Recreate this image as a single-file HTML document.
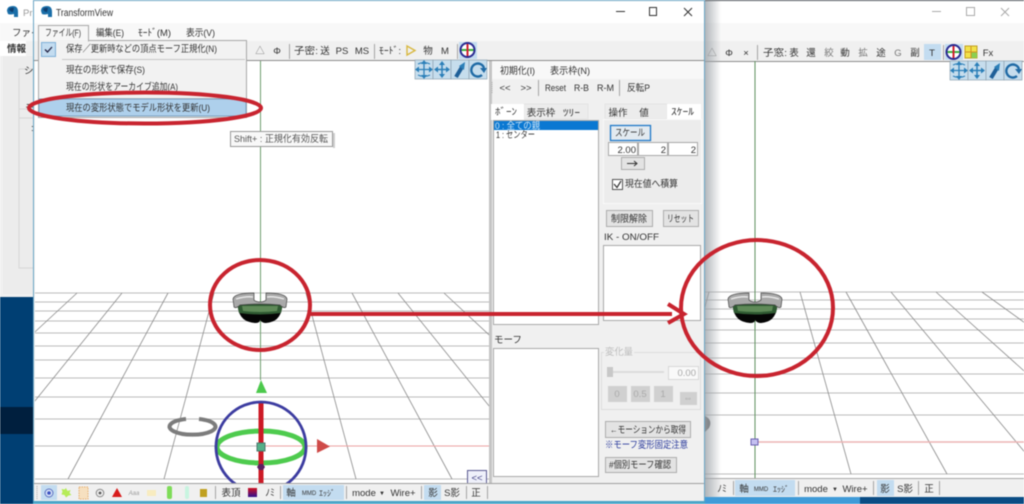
<!DOCTYPE html>
<html lang="ja"><head><meta charset="utf-8"><title>TransformView</title>
<style>
html,body{margin:0;padding:0;background:#fff;width:1024px;height:504px;overflow:hidden}
svg{display:block;filter:blur(.45px)}
text{font-family:"Liberation Sans","Noto Sans CJK JP",sans-serif;font-size:9.500px;fill:#333}
.m{text-anchor:middle}
.btn{fill:#e3e3e3;stroke:#adadad}
.box{fill:#fff;stroke:#a9a9a9}
.sel{fill:#c3dcf0}
.sep{stroke:#a5a5a5;stroke-width:1}
.gl{stroke:#bdbdbd;stroke-width:1}
.pl{stroke:#8a8a8a;stroke-width:.8}
.red{fill:none;stroke:#c8242f;stroke-width:4}
</style></head><body>
<svg width="1024" height="504" viewBox="0 0 1024 504" xmlns="http://www.w3.org/2000/svg">
<defs>
<linearGradient id="sh" x1="0" x2="1" y1="0" y2="0"><stop offset="0" stop-color="#9aa0a6" stop-opacity=".75"/><stop offset="1" stop-color="#9aa0a6" stop-opacity="0"/></linearGradient>
<linearGradient id="rp" x1="0" x2="0" y1="0" y2="1"><stop offset="0" stop-color="#d01020"/><stop offset="1" stop-color="#301090"/></linearGradient>
<g id="helm">
<path d="M-22,3Q-20,17-5,18Q0,18 0,15Q2,18 6,18Q20,17 22,3Z" fill="#050505"/>
<path d="M-23,-1L23,-1 21,8Q0,11-21,8Z" fill="#2f5a32"/>
<path d="M-18,1L18,1 17,6Q0,8-17,6Z" fill="#5f8a58"/>
<path d="M-27,-6Q-26,-12-6,-12L-6,-5Q-4,-3 0,-3Q4,-3 6,-5L6,-12Q26,-12 27,-6L26,2Q24,4 20,0Q0,-2-20,0Q-24,4-26,2Z" fill="#a9a9a9" stroke="#444" stroke-width=".7"/>
<path d="M-24,-6Q-14,-9-7,-8M24,-6Q14,-9 7,-8" stroke="#e8e8e8" stroke-width="1.400" fill="none"/>
</g>
<g id="mv">
<rect x="0" y="0" width="18" height="19" fill="#c6dded" stroke="#8fa3b0" stroke-width=".7"/>
<path d="M9,1V18M1,9.500H17" stroke="#2b7fb8" stroke-width="1.300"/>
<path d="M9,0L6,4H12ZM9,19L6,15H12ZM0,9.500L4,6.500V12.500ZM18,9.500L14,6.500V12.500Z" fill="#2b7fb8"/>
<path d="M3,4Q9,1 15,4M3,15Q9,18 15,15" stroke="#2b7fb8" fill="none"/>
</g>
<g id="mv2">
<rect x="0" y="0" width="18" height="19" fill="#c6dded" stroke="#8fa3b0" stroke-width=".7"/>
<path d="M9,3V16M3,9.500H15" stroke="#2b7fb8" stroke-width="1.500"/>
<path d="M9,1L6,5H12ZM9,18L6,14H12ZM1,9.500L5,6.500V12.500ZM17,9.500L13,6.500V12.500Z" fill="#2b7fb8"/>
</g>
<g id="mv3">
<rect x="0" y="0" width="18" height="19" fill="#c6dded" stroke="#8fa3b0" stroke-width=".7"/>
<path d="M5,17L11,7" stroke="#1f5f98" stroke-width="4"/>
<path d="M14,2L8,6 13,10Z" fill="#2b7fb8"/>
</g>
<g id="mv4">
<rect x="0" y="0" width="18" height="19" fill="#c6dded" stroke="#8fa3b0" stroke-width=".7"/>
<path d="M13,15A6.500,6.500 0 1 1 15,8" fill="none" stroke="#1f6aa5" stroke-width="2.400"/>
<path d="M11,8H18L15,13Z" fill="#1f6aa5"/>
</g>
<g id="orb">
<circle cx="0" cy="0" r="7" fill="#fff" stroke="#2a2a90" stroke-width="2"/>
<path d="M-6,0H6" stroke="#40b040" stroke-width="2"/><path d="M0,-6V6" stroke="#d02030" stroke-width="2"/>
</g>
<g id="logo">
<path d="M0,5Q0,0 6,0Q11,0 11,6V11H7V8Q3,9 1,8Z" fill="#1a6ea8"/><path d="M2,3Q4,1 7,2L6,6Q3,6 2,3Z" fill="#0f3f70"/>
</g>
<clipPath id="cl"><rect x="35" y="61" width="454" height="423"/></clipPath>
<clipPath id="cr"><rect x="705" y="61" width="319" height="418"/></clipPath>
</defs>

<!-- desktop -->
<rect width="1024" height="504" fill="#003f73"/>
<rect x="0" y="407" width="34" height="27" fill="#001f3e"/>
<rect x="700" y="497" width="160" height="7" fill="#3f9bd8"/>
<rect x="860" y="497" width="164" height="7" fill="#0a4c84"/>

<!-- back-left window -->
<rect x="0" y="0" width="36" height="297" fill="#f0f0f0"/>
<rect x="0" y="0" width="36" height="23" fill="#fff"/>
<rect x="0" y="23" width="36" height="18" fill="#f8f8f8"/>
<rect x="0" y="41" width="26" height="15" fill="#fff"/>
<rect x="3" y="56" width="30" height="238" fill="#ececec"/>
<path d="M19,69V118M19,69H33M19,118H33M19,109V268H33M19,109H33" stroke="#d6d6d6" fill="none"/>
<use href="#logo" x="7" y="6"/>
<text x="23" y="16" style="fill:#999">Pr</text>
<text x="12" y="36">ファイ</text>
<text x="7" y="52" style="font-weight:bold">情報</text>
<text x="24" y="74">シ</text>
<text x="25" y="111">モ</text>
<text x="31" y="131">:</text>

<!-- right window -->
<rect x="700" y="0" width="324" height="497" fill="#fff"/>
<rect x="700" y="0" width="324" height="1" fill="#50565c"/>
<rect x="700" y="23" width="324" height="18" fill="#f8f8f8"/>
<rect x="700" y="41" width="324" height="20" fill="#f0f0f0"/>
<rect x="700" y="61" width="324" height="1" fill="#8c8c8c"/>
<path d="M932,11.500H941" stroke="#aaa"/><rect x="966.500" y="7.500" width="8" height="8" fill="none" stroke="#aaa"/>
<path d="M1001,8L1009,16M1009,8L1001,16" stroke="#aaa"/>
<rect x="924" y="44" width="17" height="16" class="sel"/>
<rect x="945" y="44" width="18" height="16" class="sel"/>
<path class="sep" d="M757.500,45V60M943.500,45V60"/>
<text class="m" x="712" y="56" style="fill:#777">△</text>
<text class="m" x="729" y="56">Φ</text>
<text class="m" x="746" y="56">×</text>
<text x="763" y="56" textLength="24" lengthAdjust="spacingAndGlyphs">子窓:</text>
<text class="m" x="794" y="56">表</text><text class="m" x="811" y="56">還</text><text class="m" x="829" y="56" style="fill:#777">絞</text><text class="m" x="845" y="56">動</text><text class="m" x="863" y="56" style="fill:#777">拡</text><text class="m" x="881" y="56">途</text><text class="m" x="898" y="56" style="fill:#777">G</text><text class="m" x="915" y="56">副</text><text class="m" x="932" y="56">T</text>
<use href="#orb" x="953.500" y="52"/>
<g><rect x="965" y="46" width="12" height="12" fill="#f2e24a" stroke="#c0a020"/><rect x="971" y="52" width="6" height="6" fill="#8ccf50"/><path d="M971,46V58M965,52H977" stroke="#d09020"/></g>
<text class="m" x="988" y="56">Fx</text>
<use href="#mv" x="950" y="61"/><use href="#mv2" x="968" y="61"/><use href="#mv3" x="986" y="61"/><use href="#mv4" x="1004" y="61"/>

<g clip-path="url(#cr)">
<path class="gl" d="M705,292H1024M705,300H1024M705,309H1024M705,319H1024M705,330H1024M705,343H1024M705,358H1024M705,374H1024M705,393H1024M705,415H1024M705,474H1024"/>
<path class="pl" d="M709,292L659,474M800,292L851,474M846,292L947,474M891,292L1043,474M936,292L1139,474M982,292L1235,474M1027,292L1331,474"/>
<path d="M755,61V479" stroke="#5e8f5e" stroke-width="1"/>
<path d="M755,442H1024" stroke="#ecb4b4" stroke-width="1.500"/>
<rect x="751" y="439" width="7" height="6" fill="#c4c0f0" stroke="#6a60b0"/>
<path d="M705,416q8,4 4,12l-4,4z" fill="#666"/>
<use href="#helm" x="755" y="305"/>
</g>

<!-- right bottom toolbar -->
<rect x="705" y="479" width="319" height="18" fill="#f0f0f0"/>
<rect x="705" y="478" width="319" height="1" fill="#a8a8a8"/>
<rect x="735" y="480" width="60" height="16" class="sel"/>
<rect x="877" y="480" width="17" height="16" class="sel"/>
<path class="sep" d="M733.500,481V495M798.500,481V495M873.500,481V495M918.500,481V495M939.500,481V495"/>
<text class="m" x="722" y="492">ﾉﾐ</text><text class="m" x="744" y="492">軸</text><text class="m" x="761" y="491" style="font-size:6px">MMD</text><text class="m" x="781" y="492" style="font-size:8px">ｴｯｼﾞ</text>
<text class="m" x="816" y="492">mode</text><text class="m" x="835" y="491" style="font-size:6px">▼</text><text class="m" x="855" y="492">Wire+</text>
<text class="m" x="885" y="492">影</text><text class="m" x="905" y="492">S影</text><text class="m" x="929" y="492">正</text>

<!-- main window shadow -->
<rect x="705" y="1" width="16" height="496" fill="url(#sh)"/>

<!-- main window -->
<rect x="33" y="0" width="672" height="504" fill="#f0f0f0"/>
<rect x="33" y="1" width="671" height="22" fill="#fff"/>
<rect x="33" y="23" width="671" height="18" fill="#f8f8f8"/>
<path d="M33.500,0V504M704.500,0V504M33,.5H705" stroke="#6aa5c4" fill="none"/>
<rect x="33" y="501" width="672" height="3" fill="#4aa5c8"/>
<use href="#logo" x="41" y="6"/>
<text x="56" y="16" textLength="57" lengthAdjust="spacingAndGlyphs" style="font-size:10px">TransformView</text>
<path d="M616,11.500H625" stroke="#333"/><rect x="649.500" y="7.500" width="7" height="8" fill="none" stroke="#333"/>
<path d="M684,8L692,16M692,8L684,16" stroke="#333"/>
<text x="96" y="36" textLength="28" lengthAdjust="spacingAndGlyphs">編集(E)</text><text x="138" y="36" textLength="33" lengthAdjust="spacingAndGlyphs">ﾓｰﾄﾞ(M)</text><text x="186" y="36" textLength="29" lengthAdjust="spacingAndGlyphs">表示(V)</text>

<!-- main toolbar -->
<rect x="34" y="41" width="670" height="19" fill="#f0f0f0"/>
<rect x="34" y="60" width="670" height="1" fill="#8c8c8c"/>
<text class="m" x="260" y="54" style="fill:#777">△</text><text class="m" x="277" y="54">Φ</text>
<path class="sep" d="M289.500,44V59M374.500,44V59M457.500,44V59"/>
<text x="294" y="54" textLength="24" lengthAdjust="spacingAndGlyphs">子密:</text><text class="m" x="325" y="54">送</text>
<text class="m" x="342" y="54">PS</text><text class="m" x="362" y="54">MS</text>
<text x="379" y="54" textLength="22" lengthAdjust="spacingAndGlyphs">ﾓｰﾄﾞ:</text>
<path d="M407,46L415,50.500 407,55Z" fill="none" stroke="#d8b840" stroke-width="1.400"/>
<text class="m" x="428" y="54">物</text><text class="m" x="445" y="54">M</text>
<rect x="459" y="42" width="18" height="17" class="sel"/><use href="#orb" x="467.500" y="50"/>

<!-- left viewport -->
<rect x="35" y="61" width="454" height="423" fill="#fff"/>
<g clip-path="url(#cl)">
<path class="gl" d="M35,293H489M35,302H489M35,311H489M35,321H489M35,333H489M35,346H489M35,360H489M35,378H489M35,397H489M35,419H489M35,446H489M35,479H489"/>
<path class="pl" d="M214,293L164,479M168,293L68,479M122,293L-28,479M77,293L-124,479M31,293L-220,479M306,293L356,479M352,293L452,479M398,293L548,479M444,293L644,479"/>
<path d="M260.500,61V380" stroke="#6f9e6f" stroke-width="1"/>
<path d="M262,446H489" stroke="#eda3a3" stroke-width="1"/>
<use href="#helm" x="260" y="305"/>
<!-- gizmo -->
<path d="M256,393L261,380 267,393Z" fill="#4cc94c"/>
<path d="M186,419A23,8 0 1 0 199,419" fill="none" stroke="#7c7c7c" stroke-width="4"/>
<ellipse cx="261" cy="447" rx="44" ry="16" fill="none" stroke="#4ecb4e" stroke-width="5"/>
<rect x="258.500" y="402" width="5" height="82" fill="#cc1a26"/>
<circle cx="261" cy="447" r="45" fill="none" stroke="#3c3ca0" stroke-width="2.800"/>
<rect x="257" y="443" width="8" height="8" fill="#55b088" stroke="#4a7a70"/>
<path d="M257,467h8l-2,-3h-4zM257,467h8l-2,3h-4z" fill="#5a2060"/>
<path d="M317,439L330,446.500 317,453Z" fill="#cf4a48"/>
</g>
<use href="#mv" x="415" y="60"/><use href="#mv2" x="433" y="60"/><use href="#mv3" x="451" y="60"/><use href="#mv4" x="469" y="60"/>
<rect x="467.500" y="470.500" width="19" height="13" fill="#eef0fa" stroke="#5a5a90"/>
<text class="m" x="477" y="481" style="fill:#3c3c80">&lt;&lt;</text>

<!-- right panel -->
<rect x="489" y="61" width="3" height="423" fill="#c4c4c4"/>
<rect x="492" y="61" width="212" height="18" fill="#f8f8f8"/>
<text x="500" y="74" textLength="35" lengthAdjust="spacingAndGlyphs">初期化(I)</text><text x="550" y="74" textLength="40" lengthAdjust="spacingAndGlyphs">表示枠(N)</text>
<path d="M492,82V94" stroke="#aaa" stroke-dasharray="1 1"/>
<text class="m" x="505" y="91">&lt;&lt;</text><text class="m" x="526" y="91">&gt;&gt;</text>
<path class="sep" d="M538.500,80V96M619.500,80V96"/>
<text x="545" y="91" textLength="21" lengthAdjust="spacingAndGlyphs">Reset</text><text x="574" y="91" textLength="15" lengthAdjust="spacingAndGlyphs">R-B</text><text x="597" y="91" textLength="17" lengthAdjust="spacingAndGlyphs">R-M</text><text x="627" y="91" textLength="23" lengthAdjust="spacingAndGlyphs">反転P</text>
<rect x="524" y="104" width="64" height="15" fill="#ececec" stroke="#e4e4e4"/>
<rect x="491" y="104" width="33" height="16" fill="#fff"/>
<text x="495" y="115" textLength="22" lengthAdjust="spacingAndGlyphs">ﾎﾞｰﾝ</text><text class="m" x="541" y="116">表示枠</text><text x="563" y="116" textLength="17" lengthAdjust="spacingAndGlyphs">ﾂﾘｰ</text>
<rect x="605" y="104" width="62" height="15" fill="#ececec" stroke="#e4e4e4"/>
<rect x="667" y="104" width="34" height="16" fill="#fff"/>
<text class="m" x="618" y="116">操作</text><text class="m" x="644" y="116">値</text><text x="671" y="115" textLength="23" lengthAdjust="spacingAndGlyphs">ｽｹｰﾙ</text>
<rect x="493.500" y="120.500" width="105" height="204" class="box"/>
<rect x="494" y="121" width="104" height="9" fill="#0a78d2"/>
<text x="495" y="129" style="fill:#cfe6f8" textLength="45" lengthAdjust="spacingAndGlyphs">0 : 全ての親</text>
<text x="496" y="138" textLength="39" lengthAdjust="spacingAndGlyphs">1 : センター</text>
<rect x="603.500" y="119.500" width="98" height="84" fill="#ececec" stroke="#fafafa"/>
<rect x="610.500" y="125.500" width="40" height="15" fill="#e2eaf0" stroke="#1f78c8" stroke-width="1.300"/>
<text x="615" y="136" textLength="30" lengthAdjust="spacingAndGlyphs">スケール</text>
<rect x="608.500" y="142.500" width="29" height="13" class="box"/><rect x="638.500" y="142.500" width="29" height="13" class="box"/><rect x="668.500" y="142.500" width="29" height="13" class="box"/>
<text x="636" y="153" style="text-anchor:end">2.00</text><text x="666" y="153" style="text-anchor:end">2</text><text x="696" y="153" style="text-anchor:end">2</text>
<rect x="621.500" y="157.500" width="23" height="12" class="btn"/><path d="M627,163.500H637M634,161L637,163.500 634,166" stroke="#333" fill="none"/>
<rect x="612.500" y="179.500" width="10" height="10" fill="#fff" stroke="#555"/><path d="M614,184L617,187.500 621,181" stroke="#333" fill="none" stroke-width="1.200"/>
<text x="625" y="187" textLength="53" lengthAdjust="spacingAndGlyphs">現在値へ積算</text>
<rect x="606.500" y="210.500" width="46" height="16" class="btn"/><text x="611" y="222" textLength="36" lengthAdjust="spacingAndGlyphs">制限解除</text>
<rect x="663.500" y="210.500" width="35" height="16" class="btn"/><text x="667" y="222" textLength="27" lengthAdjust="spacingAndGlyphs">リセット</text>
<text x="604" y="240" textLength="55" lengthAdjust="spacingAndGlyphs">IK - ON/OFF</text>
<rect x="603.500" y="245.500" width="97" height="75" class="box"/>
<text x="494" y="343">モーフ</text>
<rect x="493.500" y="348.500" width="105" height="128" class="box"/>
<rect x="601.500" y="352.500" width="99" height="57" fill="none" stroke="#dedede"/>
<rect x="604" y="347" width="30" height="10" fill="#f0f0f0"/>
<text x="605" y="355" style="fill:#bdbdbd" textLength="28" lengthAdjust="spacingAndGlyphs">変化量</text>
<rect x="607" y="371" width="57" height="2" fill="#dcdcdc"/><rect x="607" y="367" width="6" height="10" fill="#c8c8c8"/>
<rect x="668.500" y="366.500" width="30" height="13" fill="#f9f9f9" stroke="#d8d8d8"/><text x="696" y="376" style="text-anchor:end;fill:#a8a8a8">0.00</text>
<rect x="608" y="386" width="19" height="16" fill="#d0d0d0"/><rect x="631" y="386" width="19" height="16" fill="#d0d0d0"/><rect x="654" y="386" width="19" height="16" fill="#d0d0d0"/><rect x="680" y="392" width="17" height="13" fill="#d0d0d0"/>
<text class="m" x="617" y="397" style="fill:#aaa">0</text><text class="m" x="640" y="397" style="fill:#aaa">0.5</text><text class="m" x="663" y="397" style="fill:#aaa">1</text><text class="m" x="688" y="401" style="fill:#aaa">⇔</text>
<rect x="605.500" y="421.500" width="85" height="16" class="btn"/><text x="610" y="433" textLength="76" lengthAdjust="spacingAndGlyphs">←モーションから取得</text>
<text x="605" y="448" textLength="83" lengthAdjust="spacingAndGlyphs" style="fill:#2a3a9c">※モーフ変形固定注意</text>
<rect x="605.500" y="457.500" width="71" height="15" class="btn"/><text x="609" y="468" textLength="62" lengthAdjust="spacingAndGlyphs">#個別モーフ確認</text>

<!-- bottom toolbar -->
<rect x="34" y="484" width="670" height="17" fill="#f0f0f0"/>
<rect x="34" y="483" width="670" height="1" fill="#a0a0a0"/>
<path d="M37,486V500" stroke="#aaa" stroke-dasharray="1 1"/>
<rect x="41" y="485" width="16" height="15" class="sel"/>
<circle cx="49" cy="493" r="4" fill="#d8e4f8" stroke="#5a70c0"/><circle cx="49" cy="493" r="1.800" fill="#3a50c0"/>
<path d="M66,488l1.500,3 3,-1 -1,3 2,2 -3,.5 -2.500,2 -1.500,-2.500 -3,-.5 1,-3 -1,-2.500 3,.5z" fill="#b6ec58"/>
<rect x="79" y="487" width="9" height="12" fill="#f6e0c0" stroke="#e8b070" stroke-dasharray="1.500 1"/>
<circle cx="100" cy="493" r="3.800" fill="#eee" stroke="#888"/><circle cx="100" cy="493" r="1.400" fill="#555"/>
<path d="M112,497L117,488 122,497Z" fill="#d81c1c"/>
<text class="m" x="134" y="495" style="font-size:6px;fill:#999;font-style:italic">Aaa</text>
<rect x="147" y="490" width="9" height="6" fill="#f8ecc0"/>
<rect x="167" y="486" width="5" height="13" rx="2" fill="#7edc58"/>
<rect x="185" y="486" width="4" height="13" rx="2" fill="#c8f4e0"/>
<rect x="200" y="489" width="7" height="8" fill="#c0a020"/>
<path class="sep" d="M215.500,486V499M280.500,486V499M346.500,486V499M421.500,486V499M466.500,486V499M487.500,486V499"/>
<text class="m" x="231" y="496">表頂</text>
<rect x="248" y="488" width="9" height="9" fill="url(#rp)"/>
<text class="m" x="270" y="496">ﾉﾐ</text>
<rect x="283" y="485" width="61" height="15" class="sel"/>
<text class="m" x="291" y="496">軸</text><text class="m" x="309" y="495" style="font-size:6px">MMD</text><text class="m" x="327" y="496" style="font-size:8px">ｴｯｼﾞ</text>
<text class="m" x="364" y="496">mode</text><text class="m" x="382" y="495" style="font-size:6px">▼</text><text class="m" x="403" y="496">Wire+</text>
<rect x="424" y="485" width="17" height="15" class="sel"/>
<text class="m" x="433" y="496">影</text><text class="m" x="452" y="496">S影</text><text class="m" x="476" y="496">正</text>

<!-- dropdown -->
<rect x="38.500" y="40.500" width="208" height="77" fill="#f2f2f2" stroke="#a8a8a8"/>
<rect x="38.500" y="25.500" width="50" height="15.500" fill="#f6f6f6" stroke="#a8a8a8"/>
<rect x="39" y="40" width="49" height="2" fill="#f2f2f2"/>
<text x="45" y="36" textLength="36" lengthAdjust="spacingAndGlyphs">ファイル(F)</text>
<rect x="41.500" y="42.500" width="14" height="14" fill="#c3dcf0" stroke="#7fb0d8"/>
<path d="M45,49.500L47.500,52 52,47" stroke="#224" fill="none" stroke-width="1.300"/>
<text x="66" y="52" textLength="151" lengthAdjust="spacingAndGlyphs">保存／更新時などの頂点モーフ正規化(N)</text>
<path d="M62,59.500H245M62,98.500H245" stroke="#c8c8c8"/>
<text x="66" y="73" textLength="79" lengthAdjust="spacingAndGlyphs">現在の形状で保存(S)</text>
<text x="66" y="90" textLength="112" lengthAdjust="spacingAndGlyphs">現在の形状をアーカイブ追加(A)</text>
<rect x="39" y="99" width="207" height="17" fill="#aed0ec" stroke="#7a9fbe"/>
<text x="66" y="111" textLength="144" lengthAdjust="spacingAndGlyphs">現在の変形状態でモデル形状を更新(U)</text>

<!-- tooltip -->
<rect x="230.500" y="131.500" width="102" height="15" fill="#f8f8f8" stroke="#9a9a9a"/>
<rect x="333" y="133" width="2" height="15" fill="#cfcfcf"/>
<text x="234" y="142" textLength="94" lengthAdjust="spacingAndGlyphs" style="fill:#555">Shift+ : 正規化有効反転</text>

<!-- annotations -->
<ellipse class="red" cx="145" cy="108" rx="116" ry="15.500"/>
<ellipse class="red" cx="260" cy="305" rx="50" ry="45"/>
<ellipse class="red" cx="757" cy="308" rx="76" ry="68"/>
<path d="M310,314H672" stroke="#c8242f" stroke-width="4"/>
<path d="M668,304L684,314 668,323" fill="none" stroke="#c8242f" stroke-width="4"/>
</svg>
</body></html>
